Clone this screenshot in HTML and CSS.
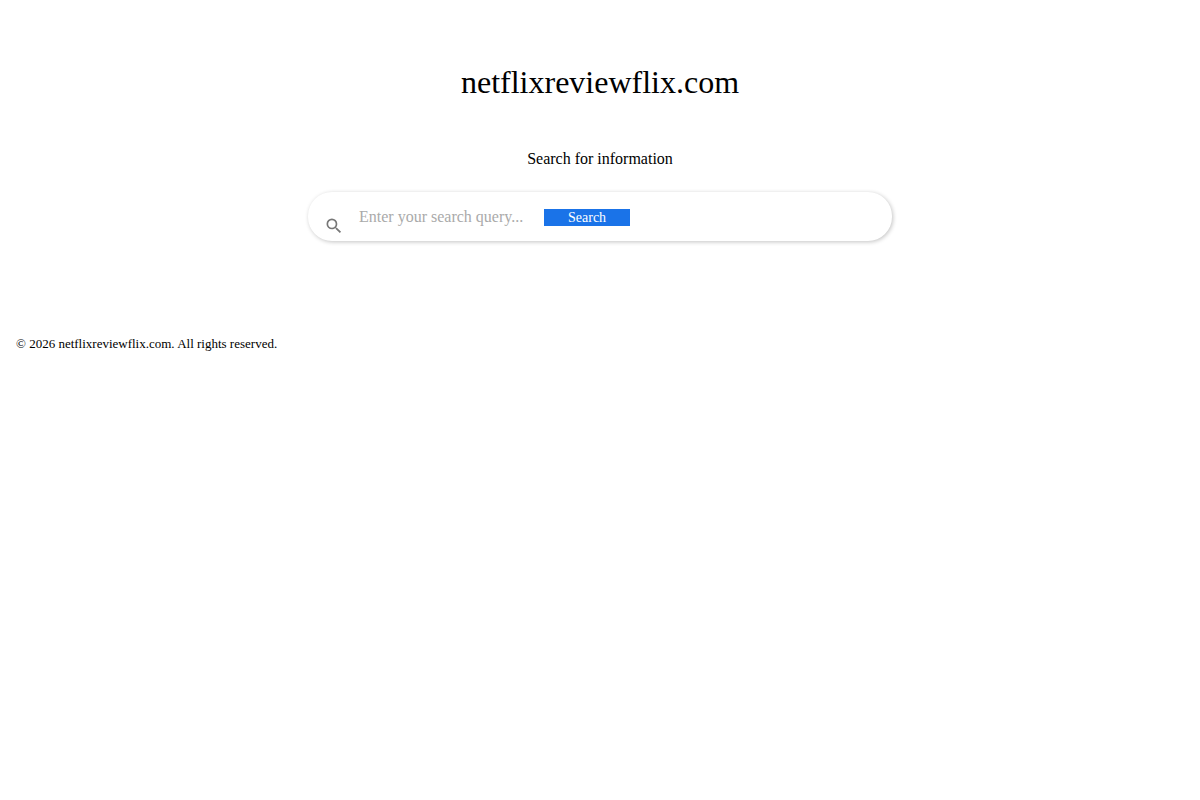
FILE: index.html
```html
<!DOCTYPE html>
<html lang="en">
<head>
    <meta charset="UTF-8">
    <meta name="viewport" content="width=device-width, initial-scale=1.0">
    <title>netflixreviewflix.com</title>
    <link rel="stylesheet" href="styles.css">
</head>
<body>
    <main class="main">
        <h1 class="site-title">netflixreviewflix.com</h1>
        <label class="search-label" for="searchInput">Search for information</label>
        <form class="search-box" action="/search" method="get">
            <svg class="search-icon" viewBox="0 0 24 24" aria-hidden="true">
                <path d="M15.5 14h-.79l-.28-.27A6.471 6.471 0 0 0 16 9.5 6.5 6.5 0 1 0 9.5 16c1.61 0 3.09-.59 4.23-1.57l.27.28v.79l5 4.99L20.49 19l-4.99-5zm-6 0C7.01 14 5 11.99 5 9.5S7.01 5 9.5 5 14 7.01 14 9.5 11.99 14 9.5 14z"/>
            </svg>
            <div class="search-fields">
                <input class="search-input" type="text" id="searchInput" name="q" placeholder="Enter your search query...">
                <button class="search-button" type="submit">Search</button>
            </div>
        </form>
    </main>
    <footer class="footer">
        <p class="copyright">© 2026 netflixreviewflix.com. All rights reserved.</p>
    </footer>
</body>
</html>
```
FILE: styles.css
```css
* {
    box-sizing: border-box;
}
body {
    margin: 0;
    font-family: "Liberation Serif", "Times New Roman", serif;
    font-size: 16px;
    line-height: 18px;
    color: #000;
    background-color: #fff;
}
.main {
    display: flex;
    flex-direction: column;
    align-items: center;
    padding: 64px 16px;
}
.site-title {
    margin: 0 0 50px;
    font-size: 32px;
    font-weight: normal;
    line-height: 36px;
}
.search-label {
    margin-bottom: 24px;
}
.search-box {
    display: flex;
    align-items: center;
    width: 100%;
    max-width: 584px;
    height: 49px;
    padding: 0 16px;
    border-radius: 24px;
    background-color: #fff;
    box-shadow: 1px 1px 4px rgba(0, 0, 0, 0.24);
}
.search-icon {
    width: 20px;
    height: 20px;
    margin: 18px 15px 0 0;
    fill: #777;
}
.search-fields {
    display: flex;
    align-items: baseline;
}
.search-input {
    width: 185px;
    padding: 0;
    border: none;
    outline: none;
    font: inherit;
    background: none;
}
.search-input::placeholder {
    color: #aaa;
}
.search-button {
    height: 17px;
    padding: 0 24px;
    border: none;
    font-family: inherit;
    font-size: 14px;
    line-height: 17px;
    color: #fff;
    background-color: #1a73e8;
    cursor: pointer;
}
.footer {
    padding: 30px 16px;
    font-size: 13px;
}
.copyright {
    margin: 0;
}
```
